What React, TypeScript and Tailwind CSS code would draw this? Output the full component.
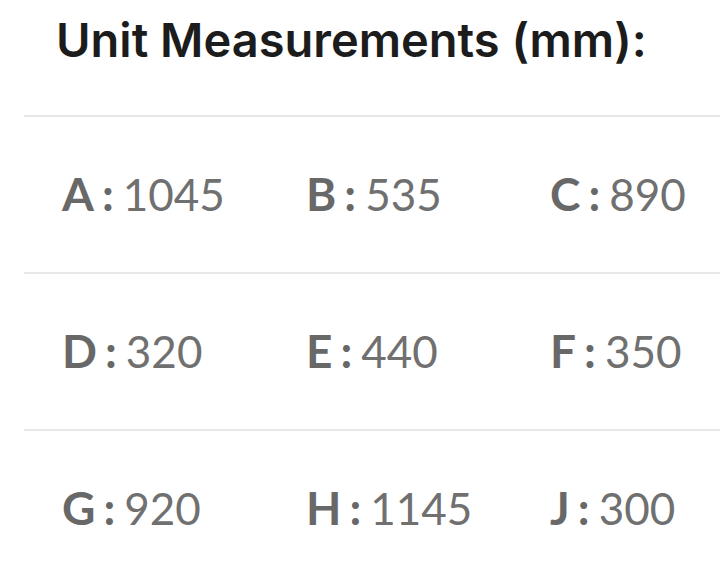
const rows = [
  [
    ["A", "1045"],
    ["B", "535"],
    ["C", "890"],
  ],
  [
    ["D", "320"],
    ["E", "440"],
    ["F", "350"],
  ],
  [
    ["G", "920"],
    ["H", "1145"],
    ["J", "300"],
  ],
];

export default function App() {
  return (
    <div className="w-[720px] h-[582px] overflow-hidden bg-white pl-6">
      <h2 className="pl-8 pt-[10px] h-[115px] text-[47px] font-semibold text-[#1c1c1c] font-['Inter',sans-serif] leading-[60px]">
        Unit Measurements (mm):
      </h2>
      {rows.map((row, i) => (
        <div key={i} className="border-t-2 border-[#e8e8e8] h-[157px] flex items-center pl-[38px] pb-[2px]">
          {row.map(([k, v]) => (
            <div key={k} className="w-[244px] shrink-0 text-[#686868] font-['Lato',sans-serif] leading-none flex items-baseline">
              <span className="font-bold text-[46px]">{k}</span>
              <span className="font-bold text-[46px] ml-[8px] mr-[9px]">:</span>
              <span className="text-[44px] text-[#707070]">{v}</span>
            </div>
          ))}
        </div>
      ))}
    </div>
  );
}
